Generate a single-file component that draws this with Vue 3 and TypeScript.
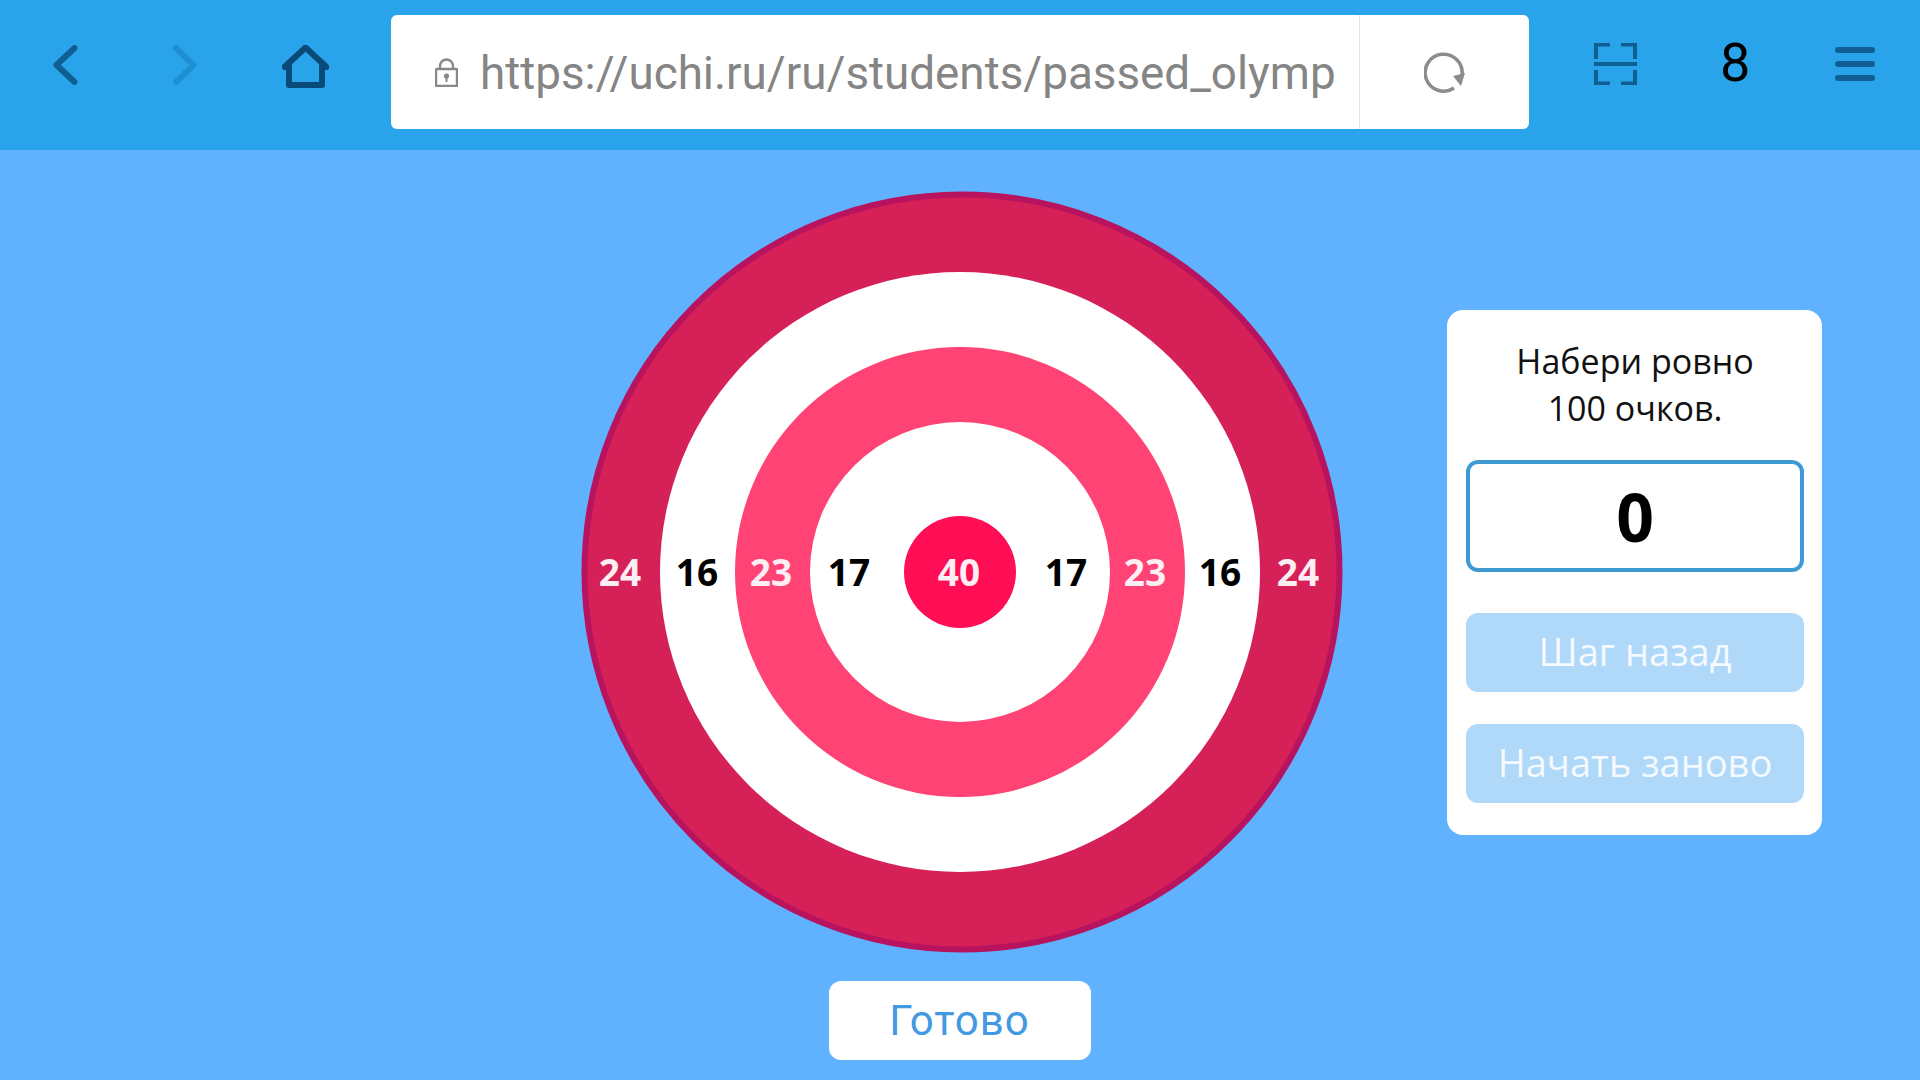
<script setup lang="ts">
// Подписи на мишени: x в координатах svg (центр = 380)
const labels = [
  { x: 39, text: '24', light: true },
  { x: 116, text: '16', light: false },
  { x: 190, text: '23', light: true },
  { x: 268, text: '17', light: false },
  { x: 378, text: '40', light: true },
  { x: 485, text: '17', light: false },
  { x: 564, text: '23', light: true },
  { x: 639, text: '16', light: false },
  { x: 717, text: '24', light: true },
]
</script>

<template>
  <div class="page">
    <header class="browser-bar">
      <svg class="icon back" width="25" height="40" viewBox="0 0 25 40">
        <path d="M21.5 3 L3.5 20 L21.5 37" />
      </svg>
      <svg class="icon forward" width="24" height="40" viewBox="0 0 24 40">
        <path d="M3 3 L20.5 20 L3 37" />
      </svg>
      <svg class="icon home" width="47" height="43" viewBox="0 0 47 43">
        <path d="M2.5 22 L23.5 2.5 L44.5 22 M7 18 V40 H40 V18" />
      </svg>

      <div class="url-bar">
        <svg class="lock" width="23" height="29" viewBox="0 0 23 29">
          <rect x="1" y="11" width="21" height="17" rx="1" />
          <path d="M5 11 V8 A6.5 6.5 0 0 1 18 8 V11" />
          <circle class="lock-dot" cx="11.5" cy="18" r="2.6" />
          <rect class="lock-dot" x="10.5" y="18" width="2" height="6" />
        </svg>
        <div class="url-text">https://uchi.ru/ru/students/passed_olymp</div>
        <div class="reload">
          <svg width="42" height="42" viewBox="0 0 42 42">
            <path d="M38 24 A18.5 18.5 0 1 0 30 37" />
            <polygon points="29,25 41,22 37,35" />
          </svg>
        </div>
      </div>

      <svg class="icon fullscreen" width="43" height="42" viewBox="0 0 43 42">
        <path d="M16 1.5 H2 V16 M27 1.5 H41 V16 M0 21 H43 M2 27 V40.5 H16 M41 27 V40.5 H27" />
      </svg>
      <span class="tab-count">8</span>
      <div class="menu">
        <span></span><span></span><span></span>
      </div>
    </header>

    <main class="stage">
      <div class="board-col">
        <svg class="board" width="760" height="760" viewBox="0 0 760 760">
          <circle cx="381" cy="380" r="377.5" fill="#d62058" stroke="#b7135f" stroke-width="6" />
          <circle cx="379" cy="380" r="300" fill="#ffffff" />
          <circle cx="379" cy="380" r="225" fill="#ff4375" />
          <circle cx="379" cy="380" r="150" fill="#ffffff" />
          <circle cx="379" cy="380" r="56" fill="#ff0d55" />
          <text
            v-for="item in labels"
            :key="item.x"
            :x="item.x"
            y="394"
            text-anchor="middle"
            class="ring-label"
            :class="{ light: item.light }"
          >{{ item.text }}</text>
        </svg>
        <button class="done-btn">Готово</button>
      </div>

      <aside class="panel">
        <p class="task">Набери ровно<br />100 очков.</p>
        <div class="score">0</div>
        <button class="panel-btn step-btn">Шаг назад</button>
        <button class="panel-btn">Начать заново</button>
      </aside>
    </main>
  </div>
</template>

<style>
html, body { margin: 0; background: #60b2ff; }
</style>

<style scoped>
.page {
  width: 1920px;
  height: 1080px;
  overflow: hidden;
  background: #60b2ff;
  font-family: "Open Sans", sans-serif;
}

/* Шапка браузера */
.browser-bar {
  height: 150px;
  display: flex;
  align-items: flex-start;
  background: #29a3ea;
}

.icon { flex-shrink: 0; fill: none; }
.icon path { stroke-linecap: round; stroke-linejoin: round; }

.back { margin: 45px 0 0 53px; }
.back path { stroke: #0f5f93; stroke-width: 6; }

.forward { margin: 45px 0 0 95px; }
.forward path { stroke: #1f8fd4; stroke-width: 6; }

.home { margin: 45px 0 0 85px; }
.home path { stroke: #0a4a78; stroke-width: 6; }

.url-bar {
  width: 1138px;
  height: 114px;
  margin: 15px 0 0 62px;
  display: flex;
  align-items: center;
  background: #fff;
  border-radius: 6px;
}

.lock { margin: 0 0 0 44px; flex-shrink: 0; fill: none; stroke: #888; stroke-width: 2.4; }
.lock-dot { fill: #888; stroke: none; }

.url-text {
  width: 855px;
  margin: 2px 0 0 22px;
  white-space: nowrap;
  font-family: Roboto, sans-serif;
  font-size: 45.8px;
  color: #858585;
}

.reload {
  width: 171px;
  height: 100%;
  margin-left: 24px;
  box-sizing: border-box;
  display: flex;
  align-items: center;
  justify-content: center;
  border-left: 1px solid #e4e4e4;
}
.reload path { fill: none; stroke: #8c8c8c; stroke-width: 3.5; }
.reload polygon { fill: #8c8c8c; }

.fullscreen { margin: 43px 0 0 65px; }
.fullscreen path { stroke: #0f5f93; stroke-width: 4; stroke-linecap: butt; stroke-linejoin: miter; }

.tab-count {
  margin: 31px 0 0 83px;
  width: 30px;
  font-family: Roboto, sans-serif;
  font-size: 54px;
  line-height: 64px;
  color: #000;
}

.menu {
  width: 40px;
  margin: 47px 0 0 85px;
  display: flex;
  flex-direction: column;
  gap: 8px;
}
.menu span {
  height: 6px;
  border-radius: 3px;
  background: #0f5f93;
}

/* Игровая область */
.stage {
  display: flex;
  align-items: flex-start;
  padding: 42px 0 0 581px;
}

.board-col {
  width: 760px;
  display: flex;
  flex-direction: column;
  align-items: center;
}

.board { display: block; overflow: visible; }

.ring-label {
  font-family: "Open Sans", sans-serif;
  font-size: 37px;
  font-weight: 700;
  fill: #000;
}
.ring-label.light { fill: #fdeef3; }

.done-btn {
  width: 262px;
  height: 79px;
  margin: 29px 3px 0 0;
  border: 0;
  border-radius: 12px;
  background: #fff;
  color: #4299e1;
  font-family: Roboto, sans-serif;
  font-size: 42px;
  letter-spacing: 1px;
}

.panel {
  width: 375px;
  height: 525px;
  box-sizing: border-box;
  margin: 118px 0 0 106px;
  padding: 0 18px 0 19px;
  background: #fff;
  border-radius: 16px;
  display: flex;
  flex-direction: column;
}

.task {
  margin: 28px 0 0;
  text-align: center;
  font-size: 34px;
  line-height: 47px;
  color: #111;
}

.score {
  height: 112px;
  box-sizing: border-box;
  margin-top: 28px;
  border: 4px solid #3f9ad4;
  border-radius: 12px;
  display: flex;
  align-items: center;
  justify-content: center;
  font-size: 66px;
  font-weight: 700;
  color: #000;
}

.panel-btn {
  height: 79px;
  margin-top: 32px;
  padding: 0 0 4px;
  border: 0;
  border-radius: 12px;
  background: #afd8f9;
  color: #f4faff;
  font-family: "Open Sans", sans-serif;
  font-size: 38px;
}

.step-btn { margin-top: 41px; }
</style>
